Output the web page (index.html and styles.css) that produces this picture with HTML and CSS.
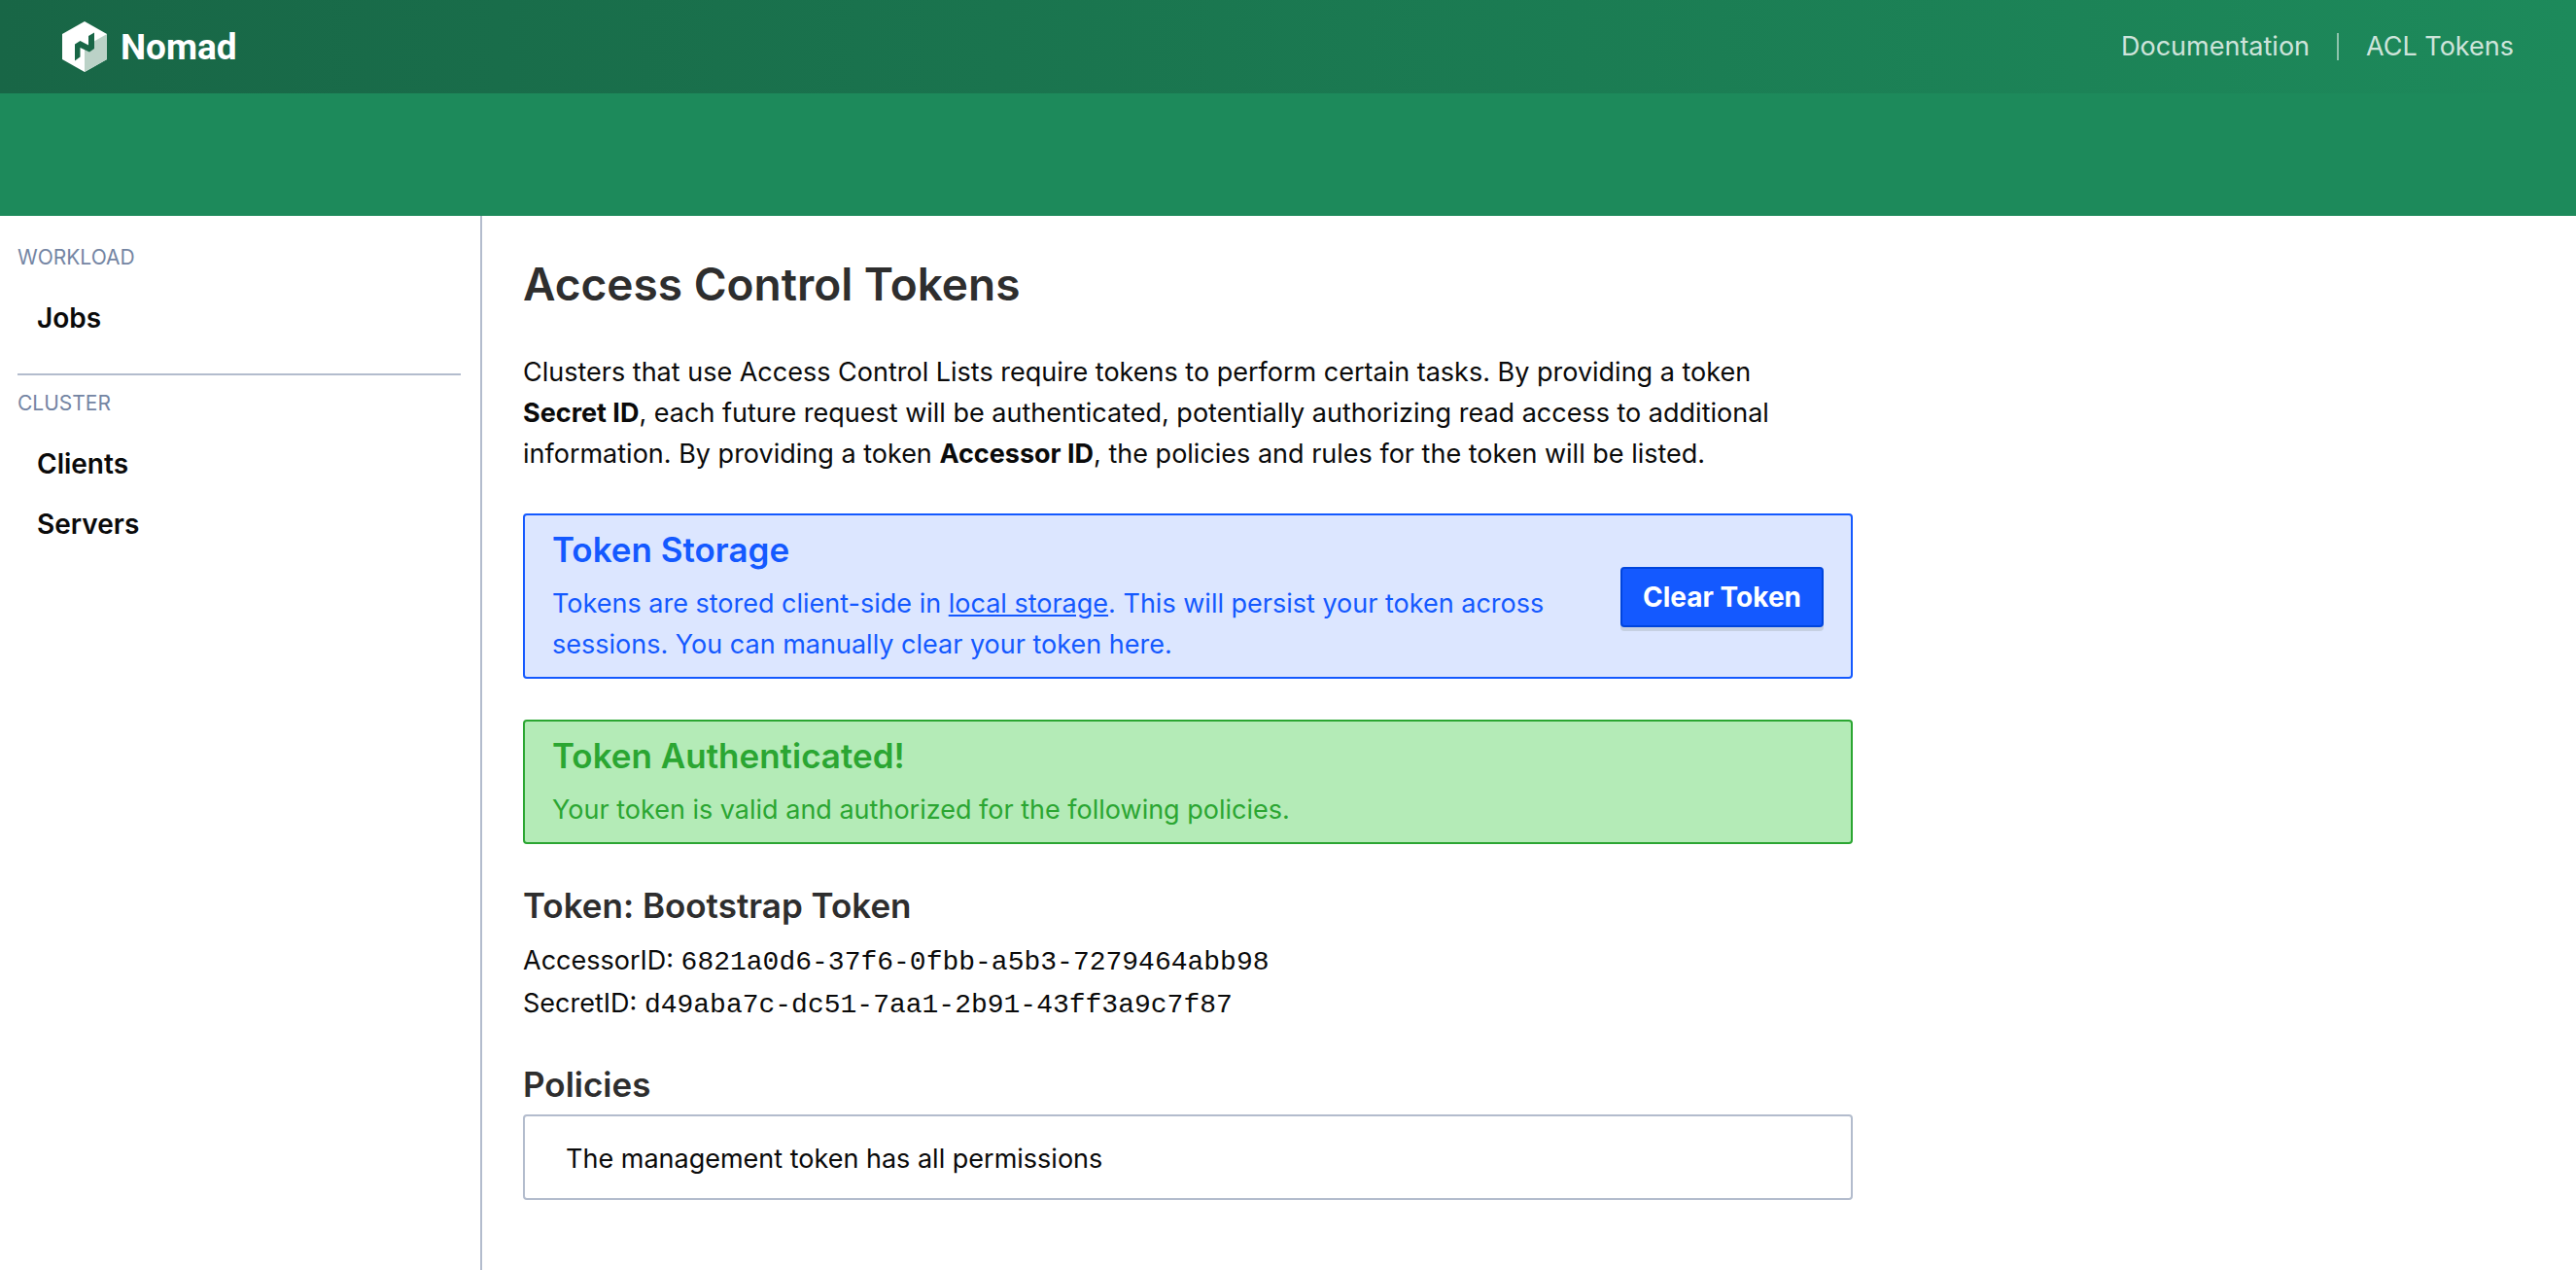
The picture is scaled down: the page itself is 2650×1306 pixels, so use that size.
FILE: index.html
```html
<!DOCTYPE html>
<html lang="en">
<head>
<meta charset="utf-8">
<meta name="viewport" content="width=device-width, initial-scale=1">
<title>Tokens - Nomad</title>
<link rel="stylesheet" href="styles.css">
</head>
<body>
<header>
  <nav class="navbar">
    <a class="brand" href="#">
      <svg class="brand-mark" viewBox="0 0 46 52" aria-hidden="true">
        <path fill="#fff" d="M23 0 46 13V39L23 52 0 39V13Z"/>
        <path fill="#bbd2c7" d="M46 13V39L23 52V26Z"/>
        <path fill="#186646" d="M33 11.500V28L28 31.500 18.500 27V36.500L13 40.500V23.500L18.500 20 27 24.500V15Z"/>
      </svg>
      <span class="brand-name">Nomad</span>
    </a>
    <div class="navbar-links">
      <a href="#">Documentation</a>
      <a href="#">ACL Tokens</a>
    </div>
  </nav>
  <div class="subnav"></div>
</header>
<div class="layout">
  <aside class="sidebar">
    <section class="menu">
      <h2 class="menu-label">Workload</h2>
      <a class="menu-link" href="#">Jobs</a>
    </section>
    <section class="menu">
      <h2 class="menu-label">Cluster</h2>
      <a class="menu-link" href="#">Clients</a>
      <a class="menu-link" href="#">Servers</a>
    </section>
  </aside>
  <main class="content">
    <div class="column">
      <h1 class="title">Access Control Tokens</h1>
      <p class="intro">Clusters that use Access Control Lists require tokens to perform certain tasks. By providing a token <strong>Secret ID</strong>, each future request will be authenticated, potentially authorizing read access to additional information. By providing a token <strong>Accessor ID</strong>, the policies and rules for the token will be listed.</p>
      <section class="notification is-info">
        <div class="notification-text">
          <h2 class="subtitle">Token Storage</h2>
          <p>Tokens are stored client-side in <a href="#">local storage</a>. This will persist your token across sessions. You can manually clear your token here.</p>
        </div>
        <button class="button" type="button">Clear Token</button>
      </section>
      <section class="notification is-success">
        <div class="notification-text">
          <h2 class="subtitle">Token Authenticated!</h2>
          <p>Your token is valid and authorized for the following policies.</p>
        </div>
      </section>
      <section class="token">
        <h2 class="subtitle">Token: Bootstrap Token</h2>
        <p>AccessorID: <code>6821a0d6-37f6-0fbb-a5b3-7279464abb98</code></p>
        <p>SecretID: <code>d49aba7c-dc51-7aa1-2b91-43ff3a9c7f87</code></p>
      </section>
      <section class="policies">
        <h2 class="subtitle">Policies</h2>
        <div class="box">The management token has all permissions</div>
      </section>
    </div>
  </main>
</div>
</body>
</html>
```
FILE: styles.css
```css
* {
  box-sizing: border-box;
}

body {
  display: flex;
  flex-direction: column;
  min-height: 100vh;
  margin: 0;
  background: #fff;
  color: #0a0a0a;
  font-family: Inter, "Liberation Sans", sans-serif;
  font-size: 27px;
  line-height: 42px;
}

h1,
h2,
p {
  margin: 0;
}

/* Header */

.navbar {
  display: flex;
  align-items: center;
  justify-content: space-between;
  height: 96px;
  padding: 0 64px;
  background: linear-gradient(to right, #186646, #1d8a5b);
}

.brand {
  display: flex;
  align-items: center;
  gap: 14px;
  color: #fff;
  text-decoration: none;
}

.brand-mark {
  width: 46px;
  height: 52px;
}

.brand-name {
  padding-top: 2px;
  font-family: Roboto, sans-serif;
  font-size: 37px;
  font-weight: 700;
}

.navbar-links {
  display: flex;
  align-items: center;
}

.navbar-links a {
  color: rgba(255, 255, 255, 0.8);
  line-height: 28px;
  text-decoration: none;
}

.navbar-links a + a {
  margin-left: 28px;
  padding-left: 28px;
  border-left: 2px solid rgba(255, 255, 255, 0.5);
}

.subnav {
  height: 126px;
  background: #1d8a5b;
}

/* Page layout */

.layout {
  display: flex;
  flex: 1;
}

.sidebar {
  flex: none;
  width: 496px;
  padding: 20px 20px 20px 18px;
  border-right: 2px solid #b3bccd;
}

.menu + .menu {
  margin-top: 26px;
  padding-top: 6px;
  border-top: 2px solid #b3bccd;
}

.menu-label {
  padding: 8px 0 16px;
  color: #7485a3;
  font-size: 21px;
  font-weight: 400;
  line-height: 30px;
  text-transform: uppercase;
}

.menu-link {
  display: block;
  padding: 10px 20px;
  color: #0a0a0a;
  font-size: 28px;
  font-weight: 600;
  text-decoration: none;
}

.content {
  display: grid;
  flex: 1;
  grid-template-columns: 2fr 1fr;
  gap: 18px;
  padding: 42px;
}

/* Content */

.title {
  margin-bottom: 42px;
  color: #2e2e2e;
  font-size: 46px;
  font-weight: 600;
  line-height: 56px;
}

.subtitle {
  color: #2e2e2e;
  font-size: 35px;
  font-weight: 600;
  line-height: 42px;
}

.intro {
  margin-bottom: 40px;
  padding-right: 42px;
}

.notification {
  display: flex;
  align-items: center;
  justify-content: space-between;
  gap: 56px;
  margin-bottom: 42px;
  padding: 14px 28px 12px;
  border: 2px solid;
  border-radius: 4px;
}

.notification .subtitle {
  margin-bottom: 14px;
  color: inherit;
}

.notification a {
  color: inherit;
}

.is-info {
  background: #dce6ff;
  color: #1459ff;
}

.is-success {
  background: #b4ebb7;
  color: #2ba632;
}

.button {
  flex: none;
  padding: 8px 21px;
  border: 2px solid #0045dd;
  border-radius: 4px;
  background: #1459ff;
  box-shadow: 0 4px 0 #c6d0e2;
  color: #fff;
  font: inherit;
  font-size: 28px;
  font-weight: 700;
}

.token {
  margin-bottom: 40px;
}

.token .subtitle {
  margin-bottom: 14px;
}

.token p {
  line-height: 44px;
}

.token code {
  font-family: "Liberation Mono", monospace;
  font-size: 28px;
  line-height: 28px;
}

.policies .subtitle {
  margin-bottom: 10px;
}

.box {
  padding: 23px 42px 19px;
  border: 2px solid #b3bccd;
  border-radius: 4px;
}
```
